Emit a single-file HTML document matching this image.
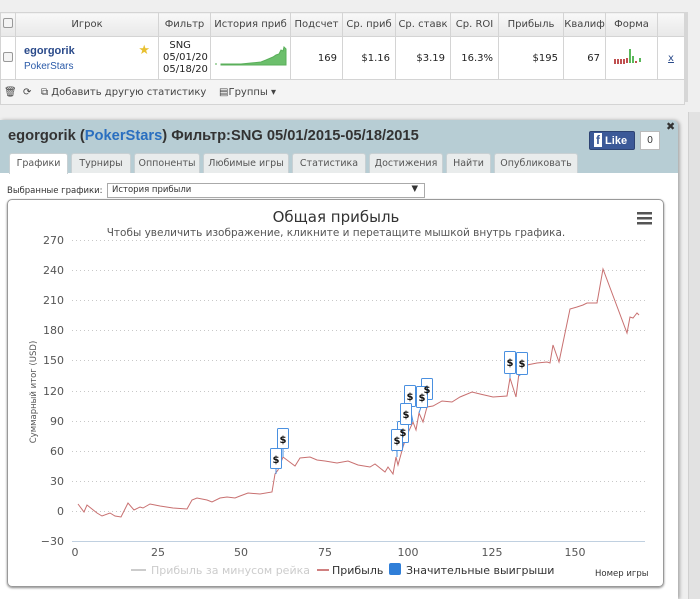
<!DOCTYPE html>
<html><head><meta charset="utf-8">
<style>
*{margin:0;padding:0;box-sizing:border-box}
body{width:700px;height:599px;background:#efefef;font-family:"Liberation Sans","DejaVu Sans",sans-serif;font-size:11px;color:#333;position:relative;overflow:hidden}
.abs{position:absolute}
table{border-collapse:collapse;position:absolute;left:0;top:12px;width:684px;background:#fff;table-layout:fixed}
td,th{border:1px solid #d4d4d4;font-weight:normal;overflow:hidden;white-space:nowrap;font-size:10px;font-family:"DejaVu Sans",sans-serif}
th{height:24px;background:linear-gradient(#f8f8f8,#e8e8e8);color:#444;text-align:center}
td{height:39px;text-align:right;padding-right:5px;color:#222}
.cb{display:inline-block;width:10px;height:10px;border:1px solid #999;border-radius:2px;background:#f4f4f4}
.tab{position:absolute;top:153px;height:20px;background:#e9ecec;border:1px solid #c8d0d3;border-bottom:none;border-radius:3px 3px 0 0;font-family:"DejaVu Sans",sans-serif;font-size:9.5px;color:#555;text-align:center;line-height:19px}
</style></head><body>
<table>
<colgroup><col style="width:15px"><col style="width:143px"><col style="width:52px"><col style="width:80px"><col style="width:52px"><col style="width:53px"><col style="width:55px"><col style="width:48px"><col style="width:65px"><col style="width:42px"><col style="width:52px"><col style="width:27px"></colgroup>
<tr><th><span class="cb"></span></th><th>Игрок</th><th>Фильтр</th><th>История приб</th><th>Подсчет</th><th>Ср. приб</th><th>Ср. ставк</th><th>Ср. ROI</th><th>Прибыль</th><th>Квалиф</th><th>Форма</th><th></th></tr>
<tr><td style="text-align:center;padding:0"><span class="cb"></span></td>
<td style="text-align:left;padding-left:8px;position:relative"><div style="font-weight:bold;color:#2a4a8a;font-size:11px;font-family:'Liberation Sans',sans-serif">egorgorik</div><div style="color:#2a5aa8;margin-top:4px;font-family:'Liberation Sans',sans-serif">PokerStars</div><span style="position:absolute;right:8px;top:6px;color:#e8c030;font-size:13px">★</span></td>
<td style="text-align:left;padding:0 0 0 4px;line-height:12px">&nbsp;&nbsp;SNG<br>05/01/20<br>05/18/20</td>
<td style="padding:0"><svg width="80" height="39"><path d="M4,27 L6,27 M10,27 L30,27 L40,26 L50,25 L55,23 L62,20 L65,18 L68,17 L70,13 L72,14 L73,10 L75,12 L75,28 L10,28 Z" fill="#6cbf6c" stroke="#5aaf5a" stroke-width="1"/></svg></td>
<td>169</td><td>$1.16</td><td>$3.19</td><td>16.3%</td><td>$195</td><td>67</td>
<td style="padding:0"><svg width="52" height="39"><g fill="#c05050"><rect x="8" y="22" width="2" height="5"/><rect x="11" y="22" width="2" height="5"/><rect x="14" y="22" width="2" height="5"/><rect x="17" y="22" width="2" height="5"/><rect x="20" y="21" width="2" height="5"/><rect x="29" y="24" width="2" height="2"/></g><g fill="#5ab85a"><rect x="23" y="12" width="2" height="14"/><rect x="26" y="19" width="2" height="7"/><rect x="33" y="21" width="2" height="4"/></g></svg></td>
<td style="text-align:center;padding:0;color:#2a4a8a;text-decoration:underline">x</td></tr>
<tr><td colspan="12" style="height:25px;text-align:left;padding-left:3px;background:#f4f4f4;color:#444;font-size:10px">🗑&nbsp;&nbsp;⟳&nbsp;&nbsp;&nbsp;⧉ Добавить другую статистику&nbsp;&nbsp;&nbsp;&nbsp;▤Группы ▾</td></tr>
</table>
<div class="abs" style="left:684px;top:12px;width:4px;height:90px;background:#d6d6d6"></div>
<div class="abs" style="left:688px;top:112px;width:12px;height:487px;background:#e2e2e2;border-left:1px solid #d0d0d0"></div>

<div class="abs" style="left:0;top:120px;width:678px;height:479px;background:#fff;border-radius:0 6px 0 0;box-shadow:2px 0 3px #aaa"></div>
<div class="abs" style="left:0;top:120px;width:678px;height:53px;background:#b7cdd4;border-radius:0 6px 0 0"></div>
<div class="abs" style="left:8px;top:128px;font-size:14.7px;font-weight:bold;color:#333">egorgorik (<span style="color:#2a6fc0">PokerStars</span>) Фильтр:SNG 05/01/2015-05/18/2015</div>
<div class="abs" style="left:589px;top:131px;width:46px;height:19px;background:#3b5998;border:1px solid #2d4373;border-radius:2px;color:#fff;font-weight:bold;font-size:11px;line-height:17px;padding-left:4px"><span style="background:#fff;color:#3b5998;padding:0 2px;font-size:12px">f</span> Like</div>
<div class="abs" style="left:640px;top:131px;width:20px;height:19px;background:#fff;border:1px solid #bbb;text-align:center;line-height:17px;font-size:10px">0</div>
<div class="abs" style="left:666px;top:120px;font-size:11px;font-weight:bold">✖</div>
<div class="tab" style="left:9px;width:59px;background:#fff;height:21px">Графики</div>
<div class="tab" style="left:71px;width:60px">Турниры</div>
<div class="tab" style="left:134px;width:66px">Оппоненты</div>
<div class="tab" style="left:203px;width:86px">Любимые игры</div>
<div class="tab" style="left:292px;width:74px">Статистика</div>
<div class="tab" style="left:369px;width:74px">Достижения</div>
<div class="tab" style="left:446px;width:45px">Найти</div>
<div class="tab" style="left:494px;width:84px">Опубликовать</div>

<div class="abs" style="left:7px;top:186px;font-size:8.5px;font-family:'DejaVu Sans',sans-serif">Выбранные графики:</div>
<div class="abs" style="left:107px;top:183px;width:318px;height:15px;border:1px solid #aaa;font-size:8.5px;font-family:'DejaVu Sans',sans-serif;padding:1px 4px">История прибыли<span style="position:absolute;right:6px;top:0">▼</span></div>

<div class="abs" style="left:7px;top:199px;width:657px;height:388px;border:1px solid #999;border-radius:5px;box-shadow:0 1px 2px #888"></div>
<svg class="abs" style="left:0;top:0" width="700" height="599" font-family="DejaVu Sans, sans-serif">
<text x="336" y="222" text-anchor="middle" font-size="15" fill="#333">Общая прибыль</text>
<text x="336" y="236" text-anchor="middle" font-size="10.5" fill="#555">Чтобы увеличить изображение, кликните и перетащите мышкой внутрь графика.</text>
<g fill="#555"><rect x="637" y="212" width="15" height="2.5"/><rect x="637" y="217" width="15" height="2.5"/><rect x="637" y="222" width="15" height="2.5"/></g>
<g stroke="#c8c8c8" stroke-dasharray="1,3">
<line x1="72" x2="645" y1="240.5" y2="240.5"/><line x1="72" x2="645" y1="270.5" y2="270.5"/><line x1="72" x2="645" y1="300.5" y2="300.5"/><line x1="72" x2="645" y1="330.5" y2="330.5"/><line x1="72" x2="645" y1="360.5" y2="360.5"/><line x1="72" x2="645" y1="391.5" y2="391.5"/><line x1="72" x2="645" y1="421.5" y2="421.5"/><line x1="72" x2="645" y1="451.5" y2="451.5"/><line x1="72" x2="645" y1="481.5" y2="481.5"/><line x1="72" x2="645" y1="511.5" y2="511.5"/>
</g>
<line x1="72" x2="645" y1="541.5" y2="541.5" stroke="#c0d0e0"/>
<g font-size="11" fill="#555" text-anchor="end">
<text x="64" y="244">270</text><text x="64" y="274">240</text><text x="64" y="304">210</text><text x="64" y="334">180</text><text x="64" y="364">150</text><text x="64" y="395">120</text><text x="64" y="425">90</text><text x="64" y="455">60</text><text x="64" y="485">30</text><text x="64" y="515">0</text><text x="64" y="545">−30</text>
</g>
<g font-size="11" fill="#555" text-anchor="middle">
<text x="75" y="556">0</text><text x="158" y="556">25</text><text x="241" y="556">50</text><text x="325" y="556">75</text><text x="408" y="556">100</text><text x="492" y="556">125</text><text x="575" y="556">150</text>
</g>
<text transform="translate(36,392) rotate(-90)" text-anchor="middle" font-size="8.5" fill="#555">Суммарный итог (USD)</text>
<path fill="none" stroke="#c87070" stroke-width="1" d="M78,504 L84,512 L87,505 L97,513 L102,516 L110,513 L115,516 L121,517 L128,503 L134,510 L140,507 L143,508 L150,504 L160,506 L173,508 L187,509 L192,500 L197,498 L207,500 L212,502 L220,498 L227,497 L235,498 L240,496 L248,493 L260,494 L272,492 L275,474 L278,470 L283,457 L295,466 L300,458 L310,457 L317,460 L325,461 L337,463 L348,461 L358,465 L370,467 L375,464 L385,472 L388,467 L393,474 L396,457 L398,465 L403,447 L407,435 L413,422 L416,430 L419,413 L423,422 L427,407 L433,406 L442,401 L452,402 L460,397 L472,392 L480,394 L493,397 L507,396 L510,378 L516,397 L519,373 L527,365 L537,363 L547,362 L550,363 L553,345 L559,362 L570,309 L577,307 L583,305 L587,303 L597,303 L603,269 L627,333 L630,317 L633,318 L637,313 L639,315"/>
<g stroke="#4a90e0" stroke-width="1" fill="#fff" font-size="10" font-weight="bold">
<line x1="276" y1="469" x2="276" y2="474"/><line x1="283" y1="449" x2="283" y2="457"/><line x1="397" y1="451" x2="397" y2="457"/><line x1="403" y1="443" x2="403" y2="447"/><line x1="406" y1="424" x2="406" y2="435"/><line x1="410" y1="407" x2="413" y2="422"/><line x1="421" y1="407" x2="419" y2="413"/><line x1="427" y1="399" x2="427" y2="407"/><line x1="510" y1="373" x2="510" y2="378"/><line x1="521" y1="374" x2="519" y2="376"/>
<rect x="270.5" y="448.5" width="11" height="20" rx="1"/>
<rect x="277.5" y="428.5" width="11" height="20" rx="1"/>
<rect x="397.5" y="421.5" width="11" height="21" rx="1"/>
<rect x="391.5" y="429.5" width="11" height="21" rx="1"/>
<rect x="421.5" y="378.5" width="11" height="21" rx="1"/>
<rect x="404.5" y="385.5" width="11" height="21" rx="1"/>
<rect x="400.5" y="403.5" width="11" height="21" rx="1"/>
<rect x="416.5" y="386.5" width="11" height="21" rx="1"/>
<rect x="504.5" y="351.5" width="11" height="22" rx="1"/>
<rect x="516.5" y="352.5" width="11" height="22" rx="1"/>
</g>
<g font-size="10" font-weight="bold" fill="#111" text-anchor="middle">
<text x="276" y="463">$</text><text x="283" y="443">$</text><text x="403" y="436">$</text><text x="397" y="444">$</text><text x="427" y="393">$</text><text x="410" y="400">$</text><text x="406" y="418">$</text><text x="422" y="401">$</text><text x="510" y="366">$</text><text x="522" y="367">$</text>
</g>
<line x1="131" x2="146" y1="570" y2="570" stroke="#ccc" stroke-width="2"/>
<text x="151" y="574" font-size="11" fill="#ccc">Прибыль за минусом рейка</text>
<line x1="317" x2="329" y1="570" y2="570" stroke="#d08080" stroke-width="2"/>
<text x="332" y="574" font-size="11" fill="#333">Прибыль</text>
<rect x="389" y="563" width="12" height="12" rx="2" fill="#2f7ed8"/>
<text x="406" y="574" font-size="11" fill="#333">Значительные выигрыши</text>
<text x="595" y="576" font-size="8.5" fill="#333">Номер игры</text>
</svg>
</body></html>
